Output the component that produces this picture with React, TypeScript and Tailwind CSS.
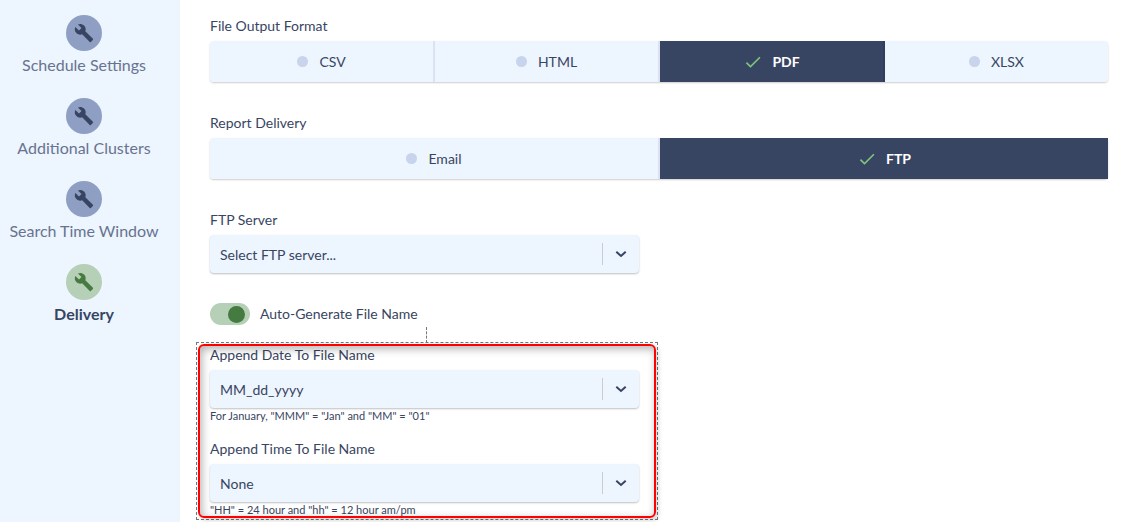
import { useState } from "react";
import clsx from "clsx";
import { MdCheck } from "react-icons/md";

const steps = ["Schedule Settings", "Additional Clusters", "Search Time Window", "Delivery"];

function WrenchIcon() {
  return (
    <svg viewBox="0 0 24 24" className="size-5" fill="currentColor" aria-hidden="true">
      <path d="M22.7 19l-9.1-9.1c.9-2.3.4-5-1.5-6.9-2-2-5-2.4-7.4-1.3L9 6 6 9 1.6 4.7C.4 7.1.9 10.1 2.9 12.1c1.9 1.9 4.6 2.4 6.9 1.5l9.1 9.1c.4.4 1 .4 1.4 0l2.3-2.3c.5-.4.5-1.1.1-1.4z" />
    </svg>
  );
}

function ChevronIcon() {
  return (
    <svg viewBox="0 0 20 20" className="size-5" fill="none" stroke="currentColor" strokeWidth="2" aria-hidden="true">
      <path d="M5.3 7.8 10 12l4.7-4.2" />
    </svg>
  );
}

function Sidebar({ active }: { active: string }) {
  return (
    <nav className="w-[180px] shrink-0 bg-[#edf5ff] pt-[15px] pr-3">
      <ul className="space-y-[21px]">
        {steps.map((step) => {
          const current = step === active;
          return (
            <li key={step}>
              <button type="button" className="flex w-full flex-col items-center gap-[2px]">
                <span
                  className={clsx(
                    "flex size-9 items-center justify-center rounded-full",
                    current ? "bg-[#b6cfb7] text-[#457a40]" : "bg-[#8f9fc4] text-[#384562]",
                  )}
                >
                  <WrenchIcon />
                </span>
                <span
                  className={clsx(
                    "text-base whitespace-nowrap",
                    current ? "font-bold text-[#384562]" : "text-[#68738f]",
                  )}
                >
                  {step}
                </span>
              </button>
            </li>
          );
        })}
      </ul>
    </nav>
  );
}

type SegmentedProps = {
  legend: string;
  name: string;
  options: string[];
  value: string;
  onChange: (value: string) => void;
};

function Segmented({ legend, name, options, value, onChange }: SegmentedProps) {
  return (
    <fieldset className="mb-[31px]">
      <legend className="mb-[5px] leading-5">{legend}</legend>
      <div className="flex rounded-sm shadow-[0_1px_2px_rgba(0,0,0,0.2)]">
        {options.map((option) => {
          const selected = option === value;
          return (
            <label
              key={option}
              className={clsx(
                "flex h-[41px] flex-1 cursor-pointer items-center justify-center border-r-2 first:rounded-l-sm last:border-r-0",
                selected
                  ? "gap-[9px] border-[#2f3d60] bg-[#384562] font-bold text-white"
                  : "gap-[11px] border-[#dbe3f3] bg-[#edf5ff] last:rounded-r-sm",
              )}
            >
              <input
                type="radio"
                name={name}
                className="sr-only"
                checked={selected}
                onChange={() => onChange(option)}
              />
              {selected ? (
                <MdCheck size={20} className="text-[#7fc57f]" />
              ) : (
                <span className="size-[11px] rounded-full bg-[#c8d3ec]" />
              )}
              {option}
            </label>
          );
        })}
      </div>
    </fieldset>
  );
}

type SelectFieldProps = {
  id: string;
  label: string;
  options: string[];
  hint?: string;
};

function SelectField({ id, label, options, hint }: SelectFieldProps) {
  return (
    <div>
      <label htmlFor={id} className="mb-[5px] block leading-5">
        {label}
      </label>
      <div className="relative">
        <select
          id={id}
          className="block h-[38px] w-full appearance-none rounded-sm bg-[#edf5ff] pt-[2px] pr-12 pl-[10px] shadow-[0_1px_2px_rgba(0,0,0,0.25)]"
        >
          {options.map((option) => (
            <option key={option}>{option}</option>
          ))}
        </select>
        <div className="pointer-events-none absolute inset-y-2 right-0 flex w-[37px] items-center justify-center border-l border-[#cccccc]">
          <ChevronIcon />
        </div>
      </div>
      {hint && <p className="text-[11px] leading-4">{hint}</p>}
    </div>
  );
}

export default function App() {
  const [format, setFormat] = useState("PDF");
  const [delivery, setDelivery] = useState("FTP");
  const [autoName, setAutoName] = useState(true);

  return (
    <div className="flex min-h-screen bg-white font-['Lato',sans-serif] text-sm text-[#384562]">
      <Sidebar active="Delivery" />
      <main className="min-w-0 flex-1 pt-4 pr-4 pl-[30px]">
        <Segmented
          legend="File Output Format"
          name="format"
          options={["CSV", "HTML", "PDF", "XLSX"]}
          value={format}
          onChange={setFormat}
        />
        <Segmented
          legend="Report Delivery"
          name="delivery"
          options={["Email", "FTP"]}
          value={delivery}
          onChange={setDelivery}
        />

        <div className="max-w-[429px]">
          <SelectField id="ftp-server" label="FTP Server" options={["Select FTP server..."]} />

          <label className="mt-[30px] flex w-fit cursor-pointer items-center gap-[10px]">
            <input
              type="checkbox"
              role="switch"
              className="peer sr-only"
              checked={autoName}
              onChange={(e) => setAutoName(e.target.checked)}
            />
            <span
              className={clsx(
                "flex h-[22px] w-10 items-center rounded-full px-[5px]",
                autoName ? "justify-end bg-[#b6cfb7]" : "bg-[#c8d3ec]",
              )}
            >
              <span className={clsx("size-[17px] rounded-full", autoName ? "bg-[#457a40]" : "bg-[#8f9fc4]")} />
            </span>
            Auto-Generate File Name
          </label>

          <div className="relative mt-5 space-y-[15px]">
            <SelectField
              id="append-date"
              label="Append Date To File Name"
              options={["MM_dd_yyyy"]}
              hint={'For January, "MMM" = "Jan" and "MM" = "01"'}
            />
            <SelectField
              id="append-time"
              label="Append Time To File Name"
              options={["None"]}
              hint={'"HH" = 24 hour and "hh" = 12 hour am/pm'}
            />

            {/* callout frame and its leader line */}
            <div className="pointer-events-none absolute -top-[3px] -right-[19px] -bottom-[2px] -left-[14px] border border-dashed border-[#777777]">
              <div className="absolute right-1/2 -top-4 h-4 border-l border-dashed border-[#777777]" />
              <div className="absolute inset-px rounded-md border-2 border-[#ff0000] shadow-[2px_2px_5px_rgba(0,0,0,0.2),inset_2px_3px_8px_rgba(0,0,0,0.3)]" />
            </div>
          </div>
        </div>
      </main>
    </div>
  );
}
